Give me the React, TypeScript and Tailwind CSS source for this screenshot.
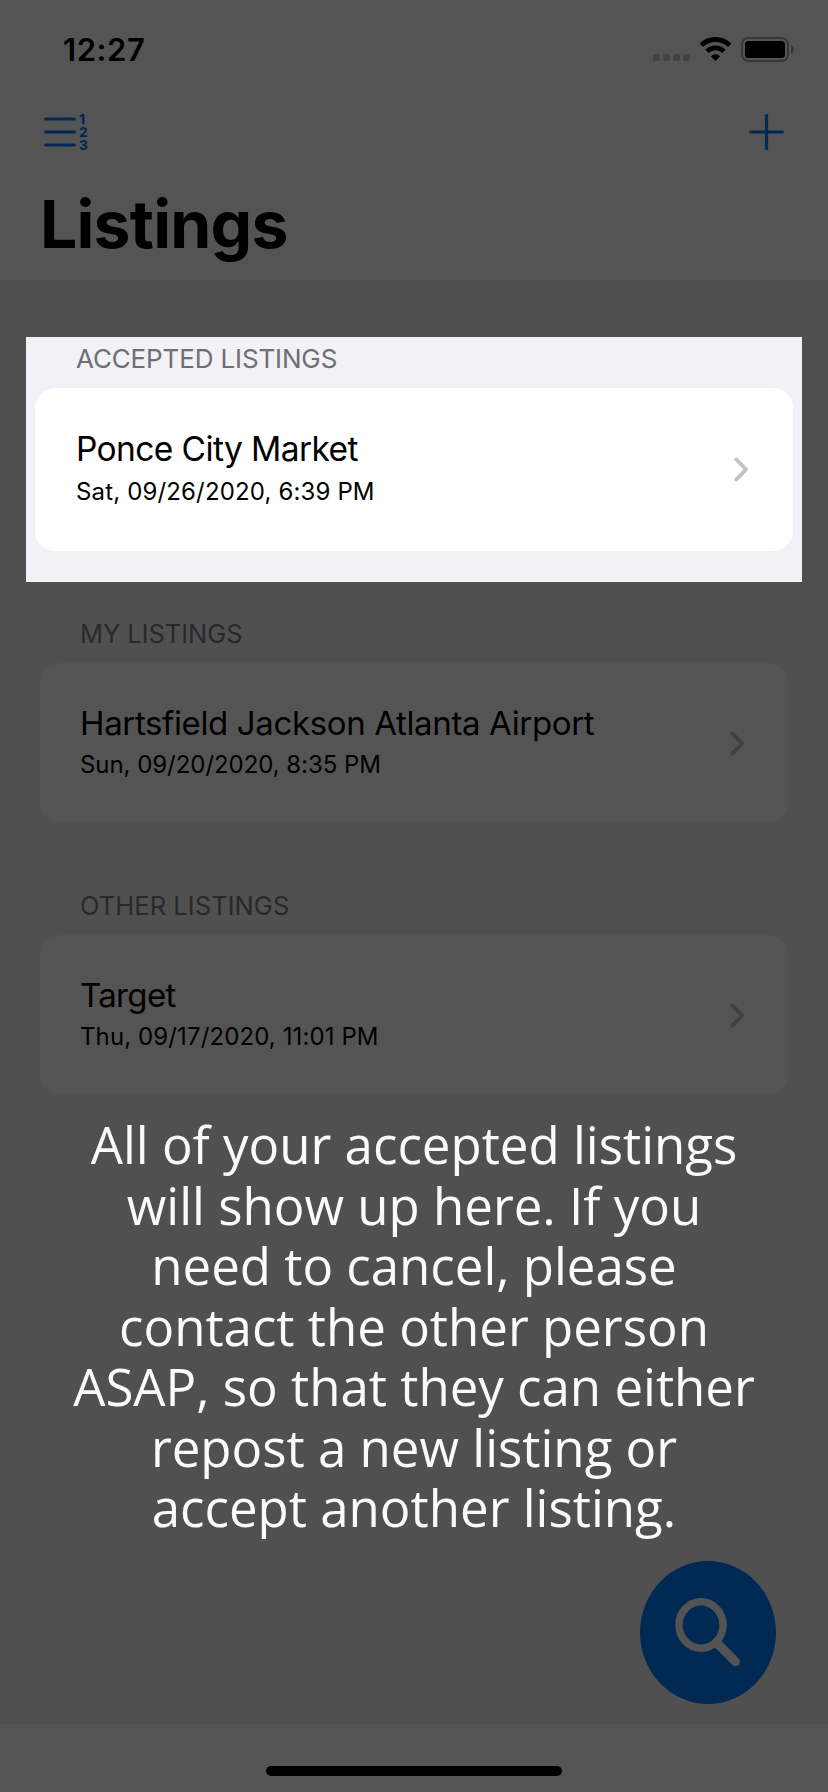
type Listing = { section: string; place: string; time: string };

function Chevron({ className }: { className: string }) {
  return (
    <svg className={className} viewBox="0 0 14 25" width="14" height="25" fill="none" stroke="currentColor" strokeWidth="3.8" strokeLinecap="round" strokeLinejoin="miter">
      <path d="M2.2 2.4 12 12.5 2.2 22.6" />
    </svg>
  );
}

function StatusBar() {
  return (
    <div className="flex h-[70px] items-start justify-between pt-[30px] pr-[33px] pl-[63px]">
      <span className="text-[31px] leading-[40px] font-semibold tracking-[0.6px]">12:27</span>
      <div className="flex items-start pt-[7px]">
        <div className="mt-[17px] flex gap-[3px]">
          <i className="size-[7px] rounded-[2px] bg-[#434343]" />
          <i className="size-[7px] rounded-[2px] bg-[#434343]" />
          <i className="size-[7px] rounded-[2px] bg-[#434343]" />
          <i className="size-[7px] rounded-[2px] bg-[#434343]" />
        </div>
        <svg className="ml-[9px]" width="33" height="25" viewBox="0 0 33 25" fill="none" stroke="#000">
          <path d="M2.3 8.3a20.3 20.3 0 0 1 28.4 0" strokeWidth="4.9" />
          <path d="M8 14.3a12.2 12.2 0 0 1 17 0" strokeWidth="4.6" />
          <path d="M16.5 24l-4.6-4.8a6.6 6.6 0 0 1 9.2 0z" fill="#000" stroke="none" />
        </svg>
        <svg className="ml-[9px]" width="54" height="25" viewBox="0 0 54 25">
          <rect x="1" y="1" width="46" height="23" rx="6.5" fill="none" stroke="#363636" strokeWidth="2" />
          <rect x="4" y="4" width="40" height="17" rx="3.5" fill="#000" />
          <path d="M50 8.2c3.6 1.3 3.6 7.3 0 8.6z" fill="#363636" />
        </svg>
      </div>
    </div>
  );
}

function Toolbar() {
  return (
    <div className="mt-10 flex h-11 items-center justify-between pr-11 pl-11 text-[#002a54]">
      <div className="flex items-center gap-[3px]">
        <svg width="32" height="36" viewBox="0 0 32 36" stroke="currentColor" strokeWidth="3.2" strokeLinecap="round">
          <path d="M1.6 5h28.8M1.6 18h28.8M1.6 31h28.8" />
        </svg>
        <div className="flex flex-col pt-px text-[13.5px] leading-[13.3px] font-extrabold">
          <span>1</span>
          <span>2</span>
          <span>3</span>
        </div>
      </div>
      <svg width="35" height="36" viewBox="0 0 35 36" stroke="currentColor" strokeWidth="3.2" strokeLinecap="round">
        <path d="M17.5 1.6v32.8M1.6 18h31.8" />
      </svg>
    </div>
  );
}

function SpotlightListing({ section, place, time }: Listing) {
  return (
    <section className="mx-[26px] h-[245px] bg-[#f2f1f6] px-[9px] pt-[6px]">
      <h2 className="pl-[41px] text-[26px] leading-[32px] tracking-[-0.14px] text-[#6e6e73]">{section}</h2>
      <div className="mt-[13px] flex h-[163px] items-start justify-between rounded-[20px] bg-white pr-[45px] pl-[41px]">
        <div className="pt-[41px]">
          <p className="text-[33.5px] leading-[40px] tracking-[-0.6px]">{place}</p>
          <p className="mt-[7px] text-[24px] leading-[32px] tracking-[0.15px]">{time}</p>
        </div>
        <Chevron className="mt-[69px] text-[#c4c4c6]" />
      </div>
    </section>
  );
}

function DimListing({ section, place, time, tight }: Listing & { tight?: boolean }) {
  return (
    <section className="mx-[40px]">
      <h2 className={`pl-[40px] text-[25.5px] leading-[32px] text-[#29292b] ${tight ? "tracking-[0.05px]" : "tracking-[-0.05px]"}`}>{section}</h2>
      <div className="mt-[13px] flex h-[160px] items-start justify-between rounded-[20px] bg-[#545454] pr-[44px] pl-[40px]">
        <div className="pt-[40px]">
          <p className={`text-[33px] leading-[40px] ${tight ? "tracking-[-0.65px]" : "tracking-[-0.36px]"}`}>{place}</p>
          <p className={`mt-[6px] text-[24px] leading-[32px] ${tight ? "tracking-[0.11px]" : "tracking-[-0.05px]"}`}>{time}</p>
        </div>
        <Chevron className="mt-[68px] text-[#404041]" />
      </div>
    </section>
  );
}

const hint = [
  "All of your accepted listings",
  "will show up here. If you",
  "need to cancel, please",
  "contact the other person",
  "ASAP, so that they can either",
  "repost a new listing or",
  "accept another listing.",
];

export default function App() {
  return (
    <div className="relative flex h-[1792px] w-[828px] flex-col overflow-hidden bg-[#545454] font-['Inter',sans-serif] text-black">
      <header className="h-[280px]">
        <StatusBar />
        <Toolbar />
        <h1 className="mt-[30px] pl-[40px] text-[66px] leading-[80px] font-bold tracking-[-0.8px]">Listings</h1>
      </header>

      <main className="h-[1444px] bg-[#505050] pt-[57px]">
        <SpotlightListing section="ACCEPTED LISTINGS" place="Ponce City Market" time="Sat, 09/26/2020, 6:39 PM" />
        <div className="mt-[36px] flex flex-col gap-[67px]">
          <DimListing section="MY LISTINGS" place="Hartsfield Jackson Atlanta Airport" time="Sun, 09/20/2020, 8:35 PM" />
          <DimListing section="OTHER LISTINGS" place="Target" time="Thu, 09/17/2020, 11:01 PM" tight />
        </div>
        <p className="mt-[19px] text-center font-['Open_Sans',sans-serif] text-[51px] leading-[60.5px] text-[#fafafa]">
          {hint.map((line) => (
            <span key={line} className="block whitespace-nowrap">{line} </span>
          ))}
        </p>
      </main>

      <footer className="flex flex-1 items-start justify-center pt-[42px]">
        <div className="h-[10px] w-[296px] rounded-full bg-black" />
      </footer>

      <button aria-label="Search" className="absolute top-[1561px] left-[640px] h-[143px] w-[136px] rounded-[50%] bg-[#002a54]">
        <svg width="136" height="143" viewBox="0 0 136 143" fill="none" stroke="#535353">
          <ellipse cx="61" cy="64" rx="22" ry="23.2" strokeWidth="7.5" />
          <path d="M77 82 95.5 100.6" strokeWidth="9" strokeLinecap="round" />
        </svg>
      </button>
    </div>
  );
}
